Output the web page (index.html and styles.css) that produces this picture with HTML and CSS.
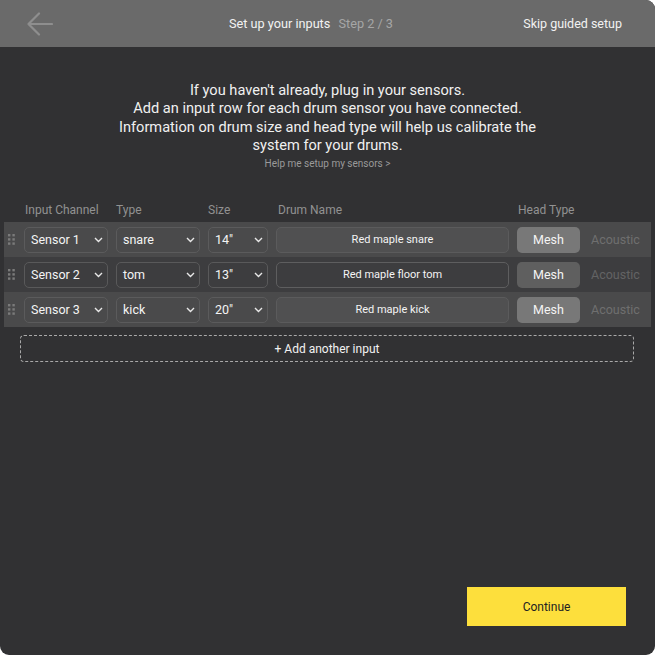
FILE: index.html
```html
<!DOCTYPE html>
<html lang="en">
<head>
<meta charset="utf-8">
<title>Set up your inputs</title>
<link rel="stylesheet" href="styles.css">
</head>
<body>
<div class="app">
  <header class="topbar">
    <svg class="back" width="26" height="24" viewBox="0 0 26 24" aria-hidden="true">
      <path d="M12 1.5 L1.5 12 L12 22.5 M1.5 12 H25" fill="none" stroke="#8e8e8e" stroke-width="2.2" stroke-linecap="round" stroke-linejoin="round"/>
    </svg>
    <div class="title">Set up your inputs <span class="step">Step 2 / 3</span></div>
    <div class="skip">Skip guided setup</div>
  </header>

  <main class="content">
    <div class="intro">
      <p>If you haven't already, plug in your sensors.<br>Add an input row for each drum sensor you have connected.<br>Information on drum size and head type will help us calibrate the<br>system for your drums.</p>
      <div class="help">Help me setup my sensors &gt;</div>
    </div>

    <div class="table">
      <div class="thead">
        <span></span>
        <span>Input Channel</span>
        <span>Type</span>
        <span>Size</span>
        <span>Drum Name</span>
        <span>Head Type</span>
        <span></span>
      </div>

      <div class="row odd">
        <svg class="grip" width="7" height="11" viewBox="0 0 7 11"><g fill="#7b7b7b"><rect x="0" y="0" width="2.4" height="2.4"/><rect x="4.4" y="0" width="2.4" height="2.4"/><rect x="0" y="4.2" width="2.4" height="2.4"/><rect x="4.4" y="4.2" width="2.4" height="2.4"/><rect x="0" y="8.4" width="2.4" height="2.4"/><rect x="4.4" y="8.4" width="2.4" height="2.4"/></g></svg>
        <div class="select"><span>Sensor 1</span><svg width="9" height="6" viewBox="0 0 9 6"><path d="M1 1 L4.5 4.5 L8 1" fill="none" stroke="#e8e8e8" stroke-width="1.4"/></svg></div>
        <div class="select"><span>snare</span><svg width="9" height="6" viewBox="0 0 9 6"><path d="M1 1 L4.5 4.5 L8 1" fill="none" stroke="#e8e8e8" stroke-width="1.4"/></svg></div>
        <div class="select"><span>14"</span><svg width="9" height="6" viewBox="0 0 9 6"><path d="M1 1 L4.5 4.5 L8 1" fill="none" stroke="#e8e8e8" stroke-width="1.4"/></svg></div>
        <div class="name">Red maple snare</div>
        <div class="mesh">Mesh</div>
        <div class="acoustic">Acoustic</div>
      </div>

      <div class="row even">
        <svg class="grip" width="7" height="11" viewBox="0 0 7 11"><g fill="#7b7b7b"><rect x="0" y="0" width="2.4" height="2.4"/><rect x="4.4" y="0" width="2.4" height="2.4"/><rect x="0" y="4.2" width="2.4" height="2.4"/><rect x="4.4" y="4.2" width="2.4" height="2.4"/><rect x="0" y="8.4" width="2.4" height="2.4"/><rect x="4.4" y="8.4" width="2.4" height="2.4"/></g></svg>
        <div class="select"><span>Sensor 2</span><svg width="9" height="6" viewBox="0 0 9 6"><path d="M1 1 L4.5 4.5 L8 1" fill="none" stroke="#e8e8e8" stroke-width="1.4"/></svg></div>
        <div class="select"><span>tom</span><svg width="9" height="6" viewBox="0 0 9 6"><path d="M1 1 L4.5 4.5 L8 1" fill="none" stroke="#e8e8e8" stroke-width="1.4"/></svg></div>
        <div class="select"><span>13"</span><svg width="9" height="6" viewBox="0 0 9 6"><path d="M1 1 L4.5 4.5 L8 1" fill="none" stroke="#e8e8e8" stroke-width="1.4"/></svg></div>
        <div class="name">Red maple floor tom</div>
        <div class="mesh">Mesh</div>
        <div class="acoustic">Acoustic</div>
      </div>

      <div class="row odd">
        <svg class="grip" width="7" height="11" viewBox="0 0 7 11"><g fill="#7b7b7b"><rect x="0" y="0" width="2.4" height="2.4"/><rect x="4.4" y="0" width="2.4" height="2.4"/><rect x="0" y="4.2" width="2.4" height="2.4"/><rect x="4.4" y="4.2" width="2.4" height="2.4"/><rect x="0" y="8.4" width="2.4" height="2.4"/><rect x="4.4" y="8.4" width="2.4" height="2.4"/></g></svg>
        <div class="select"><span>Sensor 3</span><svg width="9" height="6" viewBox="0 0 9 6"><path d="M1 1 L4.5 4.5 L8 1" fill="none" stroke="#e8e8e8" stroke-width="1.4"/></svg></div>
        <div class="select"><span>kick</span><svg width="9" height="6" viewBox="0 0 9 6"><path d="M1 1 L4.5 4.5 L8 1" fill="none" stroke="#e8e8e8" stroke-width="1.4"/></svg></div>
        <div class="select"><span>20"</span><svg width="9" height="6" viewBox="0 0 9 6"><path d="M1 1 L4.5 4.5 L8 1" fill="none" stroke="#e8e8e8" stroke-width="1.4"/></svg></div>
        <div class="name">Red maple kick</div>
        <div class="mesh">Mesh</div>
        <div class="acoustic">Acoustic</div>
      </div>
    </div>

    <div class="add">+ Add another input</div>

    <div class="footer">
      <div class="continue">Continue</div>
    </div>
  </main>
</div>
</body>
</html>
```

FILE: styles.css
```css
* { box-sizing: border-box; }
html, body { margin: 0; padding: 0; background: #ffffff; }
body { font-family: Roboto, "Liberation Sans", sans-serif; }

.app {
  width: 655px;
  height: 655px;
  display: flex;
  flex-direction: column;
  background: #313133;
  border-radius: 0 9px 9px 9px;
  overflow: hidden;
}

.topbar {
  height: 47px;
  flex: none;
  background: #6a6a6a;
  display: flex;
  align-items: center;
  padding: 0 33px 0 27px;
  color: #f2f2f2;
  font-size: 13px;
}
.back { display: block; }
.title { margin-left: 176px; font-size: 12.7px; }
.step { color: #a6a6a6; margin-left: 5px; }
.skip { margin-left: auto; font-size: 12.5px; }

.content {
  flex: 1;
  display: flex;
  flex-direction: column;
}

.intro {
  text-align: center;
  padding-top: 34px;
}
.intro p {
  margin: 0;
  color: #f0f0f0;
  font-size: 14.6px;
  line-height: 18.3px;
}
.help {
  margin-top: 3px;
  font-size: 10px;
  line-height: 14px;
  color: #9a9a9a;
}

.table { margin: 32px 4px 0 4px; }

.thead, .row {
  display: grid;
  grid-template-columns: 8px 84px 84px 60px 233px 63px 1fr;
  column-gap: 8px;
  align-items: center;
  padding-left: 4px;
}
.thead {
  font-size: 12px;
  line-height: 14px;
  color: #929292;
  padding-bottom: 5px;
}
.thead span:nth-child(2) { padding-left: 1px; }
.thead span:nth-child(5) { padding-left: 2px; }
.thead span:nth-child(6) { padding-left: 1px; }

.row { height: 35px; }
.row.odd { background: #4a4a4b; }
.row.even { background: #3d3d3f; }

.grip { display: block; }

.select, .name, .mesh {
  height: 26px;
  border-radius: 5px;
  font-size: 12.5px;
  color: #f4f4f4;
}
.select {
  display: flex;
  align-items: center;
  justify-content: space-between;
  padding: 0 4px 0 6px;
  border: 1px solid #5b5b5c;
}
.even .select { border-color: #59595a; }
.select svg { display: block; }

.name {
  display: flex;
  align-items: center;
  justify-content: center;
  border: 1px solid #5b5b5c;
  background: #505051;
  font-size: 11px;
}
.even .name { background: #3d3d3f; border-color: #5e5e5f; }

.mesh {
  display: flex;
  align-items: center;
  justify-content: center;
  background: #787878;
}
.even .mesh { background: #5f5f5f; }

.acoustic {
  padding-left: 3px;
  font-size: 12.5px;
  color: #6f6f6f;
}
.even .acoustic { color: #636364; }

.add {
  margin: 8px 21px 0 20px;
  height: 27px;
  border: 1px dashed #a9a9a9;
  border-radius: 4px;
  display: flex;
  align-items: center;
  justify-content: center;
  font-size: 12px;
  color: #f2f2f2;
}

.footer {
  margin-top: auto;
  display: flex;
  justify-content: flex-end;
  padding: 0 29px 29px 0;
}
.continue {
  width: 159px;
  height: 39px;
  background: #fddf3c;
  color: #222222;
  font-size: 12px;
  display: flex;
  align-items: center;
  justify-content: center;
}
```
